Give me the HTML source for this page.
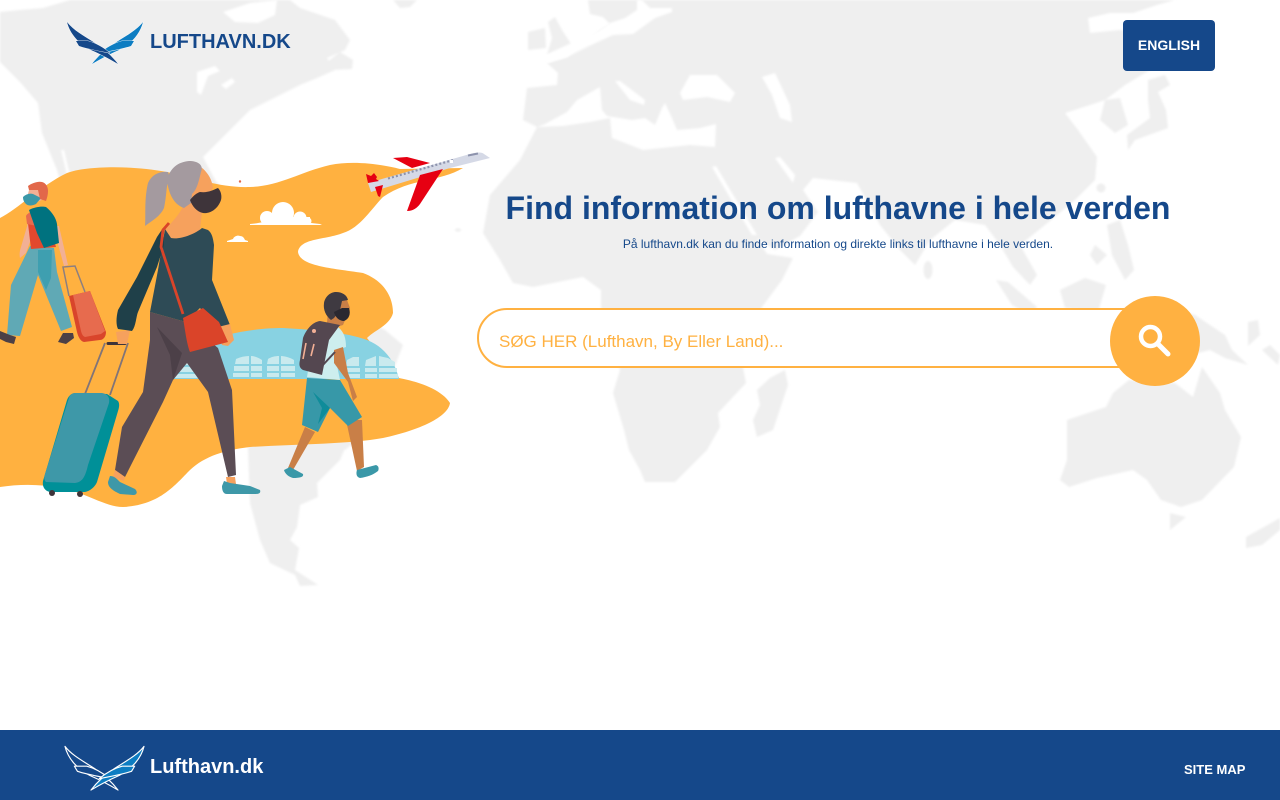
<!DOCTYPE html>
<html lang="da"><head><meta charset="utf-8"><title>Lufthavn.dk</title>
<style>
html,body{margin:0;padding:0;width:1280px;height:800px;overflow:hidden;background:#fff;font-family:"Liberation Sans",Arial,sans-serif}
.a{position:absolute;white-space:nowrap}
svg{position:absolute;left:0;top:0}
</style></head><body>
<svg width="1280" height="800" viewBox="0 0 1280 800">
<defs>
<filter id="b" x="-5%" y="-5%" width="110%" height="110%"><feGaussianBlur stdDeviation="1.1"/></filter>
<filter id="s" x="-5%" y="-5%" width="110%" height="110%"><feGaussianBlur stdDeviation="0.35"/></filter>
<path id="wl1" d="M67 22C73 30 84 36 95 43C104 49 112 56 118 64C108 58 100 54 91 50C79 44 70 34 67 22Z"/>
<path id="wl2" d="M76 41L88 41C96 43 104 48 110 53C100 51 88 49 79 46Z"/>
<path id="wr1" d="M143 22C137 30 126 36 115 43C106 49 98 56 92 64C102 58 110 54 119 50C131 44 140 34 143 22Z"/>
<path id="wr2" d="M134 41L122 41C114 43 106 48 100 53C110 51 122 49 131 46Z"/>
</defs>
<g fill="#efefef" filter="url(#b)">
<!-- North America -->
<path d="M0 62L0 12L20 10L43 8L70 0L290 0L300 8L335 20L350 40L345 50L327 58L335 70L317 78L300 85L250 110L235 125L215 145L203 157L215 180L300 280L385 330L403 345L370 430L345 450L250 450L200 360L130 300L70 215L57 170L42 133L38 103L20 82Z"/>
<path d="M327 62L340 52L353 60L352 69L330 70Z"/>
<path d="M393 0L417 0L410 7L400 8Z"/>
<!-- South America -->
<path d="M248 448L345 448L340 460L317 483L318 497L300 505L297 527L290 540L299 548L295 570L318 585L300 586L295 575L270 563L260 540L250 503Z"/>
<!-- Eurasia + Africa -->
<path d="M588 0L590 14L603 17L610 24L600 30L583 43L567 57L547 63L558 73L557 85L527 88L523 120L537 127L520 160L490 195L483 233L500 260L513 283L533 287L583 277L601 290L601 307L620 370L613 393L624 430L629 450L640 470L645 482L675 482L707 450L720 427L718 413L746 383L743 368L745 340L762 307L782 280L793 258L767 254L757 238L775 250L800 236L818 212L803 190L813 178L857 183L880 225L900 250L915 265L930 240L955 220L985 225L1000 245L1013 267L1030 285L1037 275L1020 245L1045 225L1075 200L1095 180L1097 157L1078 130L1065 113L1090 105L1105 100L1125 85L1150 70L1145 35L1120 30L1090 33L1088 18L1110 13L1133 13L1157 5L1175 0Z"/>
<!-- UK / Ireland -->
<path d="M528 32L545 28L546 48L528 50Z"/>
<path d="M548 22L555 17L562 30L573 47L555 55L547 55L552 38Z"/>
<!-- Japan / Korea -->
<path d="M1105 100L1120 98L1128 125L1115 133L1100 120Z" />
<path d="M1148 80L1165 75L1170 85L1158 92L1166 110L1168 128L1135 140L1128 150L1127 135L1150 118L1148 100Z"/>
<circle cx="1101" cy="188" r="4.500" />
<ellipse cx="928" cy="270" rx="4.500" ry="9"/>
<!-- SE Asia islands -->
<path d="M1107 225L1120 220L1128 245L1134 270L1125 280L1112 255Z"/>
<path d="M996 280L1008 282L1037 307L1030 315L1012 305Z"/>
<path d="M1060 290L1085 278L1106 285L1098 312L1065 308Z"/>
<path d="M1095 245L1107 255L1097 265L1090 255Z"/>
<!-- New Guinea -->
<path d="M1124 308L1145 300L1195 315L1225 335L1232 350L1248 365L1225 358L1210 350L1190 355L1160 345L1130 330Z"/>
<path d="M1248 322L1258 320L1260 335L1248 346Z"/><path d="M1262 350L1270 345L1280 355L1278 365Z"/>
<!-- Australia -->
<path d="M1202 367L1220 393L1225 410L1241 437L1234 467L1202 500L1181 507L1161 500L1147 480L1133 470L1097 478L1069 487L1060 480L1067 460L1067 420L1106 407L1113 393L1129 380L1175 383L1193 397Z"/>
<path d="M1170 513L1186 517L1170 530Z"/>
<path d="M1246 537L1280 518L1280 530L1262 545L1246 548Z"/>
<!-- Madagascar -->
<path d="M757 390L770 378L785 370L788 385L773 430L757 437L753 420L760 405Z"/>
<ellipse cx="458" cy="230" rx="3" ry="1.600"/>
</g>
<!-- white seas -->
<g fill="#fff" filter="url(#b)">
<path d="M223 12L250 3L277 0L275 15L258 23L235 22Z"/>
<path d="M197 72L215 66L220 71L208 76L201 95L197 92Z"/><path d="M221 85L232 78L235 82L226 89Z"/>
<path d="M61 150L64 150L70 175L67 175Z"/>
<path d="M537 127L545 124L567 112L577 100L600 87L602 110L607 116L632 120L645 118L655 125L662 108L665 103L672 118L677 130L700 128L716 124L715 147L690 145L643 150L612 138L610 118L590 122L563 126Z"/>
<path d="M615 81L620 81L645 100L644 105L630 100Z"/>
<path d="M680 93L690 75L717 75L735 93L730 102L707 97L683 100Z"/>
<path d="M762 77L775 73L790 105L792 122L780 118L772 95Z"/>
<path d="M712 167L716 166L757 235L752 235Z"/>
<path d="M775 158L780 157L795 175L793 183Z"/>
<path d="M637 0L642 0L650 8L672 8L672 12L655 18L633 34L613 35L587 47L567 57L547 63L545 55L567 45L600 30L610 23L625 18L637 10Z"/>
</g>
<!-- orange blob -->
<path fill="#ffb141" filter="url(#s)" d="M0 218C18 209 40 186 67 173C85 166 130 165 167 172C195 178 220 188 250 187C280 186 300 172 330 165C355 160 385 165 400 169L463 168C440 182 410 178 383 197C372 208 360 228 343 233C325 240 300 238 298 252C300 266 330 268 363 273C382 280 393 295 393 313C390 325 375 330 367 338L399 378C420 382 442 390 450 403C448 417 420 430 383 438C350 444 300 444 250 447C225 450 205 456 190 470C175 485 160 505 123 507C105 507 85 492 60 488C40 484 20 484 0 487Z"/>
<!-- terminal -->
<path fill="#88d2e2" d="M172 379L200 345C225 332 260 328 283 328C315 330 345 332 367 340C385 347 395 362 399 379Z"/>
<g fill="#c9eaee">
<path d="M179 367L196 367L196 372L176 372Z"/><path d="M175 374H198V378H175Z"/><path d="M184 359L198 358V365H181Z"/>
<path d="M234 366H249V371H234ZM251 366H262V371H251ZM233 373H249V377H233ZM251 373H262V377H251ZM236 359C240 357 245 356 249 356V364H235ZM251 356C255 356 259 358 262 360V364H251Z"/>
<path d="M267 366H279V371H267ZM281 366H295V371H281ZM267 373H279V377H267ZM281 373H295V377H281ZM268 359C271 357 275 356 279 356V364H267ZM281 356C285 356 291 358 294 360V364H281Z"/>
<path d="M345 368H360V372H345ZM346 374H360V378H346ZM347 360L353 357L359 357V366H346Z"/>
<path d="M365 368H377V372H365ZM379 368H397V372H379ZM365 374H377V378H365ZM379 374H398V378H379ZM366 360L376 356V366H365ZM379 356L388 358L395 362V366H379Z"/>
</g>
<!-- clouds -->
<g fill="#fff"><path d="M250 224C260 223 267 222 268 218L320 224L322 225H250Z"/><circle cx="267" cy="218" r="7"/><circle cx="283" cy="213" r="11"/><circle cx="300" cy="218" r="6.500"/><circle cx="308" cy="221" r="3.500"/><rect x="262" y="217" width="48" height="7"/>
<path d="M227 241L233 239C234 236 238 235 240 236C243 236 244 238 245 240L248 241V242H227Z"/></g>
<circle cx="240" cy="181.500" r="1.200" fill="#e2684a"/>
<!-- plane -->
<path fill="#e60012" d="M393 158L407 157L430 163L412 168Z"/>
<path fill="#d5d9e6" d="M368 183L470 154C477 152 482 152 484 154L490 158L450 168L371 192Z"/>
<path fill="none" stroke="#8d93ad" stroke-width="2.200" stroke-dasharray="2 2.100" d="M388 178.500L455 159.500"/>
<path fill="none" stroke="#8d93ad" stroke-width="2" d="M468 155.500L478 153.500"/>
<rect x="450" y="160" width="3" height="3" fill="#fff"/>
<path fill="#e60012" d="M443 169L420 175L407 211C413 211 417 208 420 204Z"/>
<path fill="#e60012" d="M366 174L371 176L374 173L377 177L376 179L379 181L368 183Z"/>
<path fill="#e60012" d="M375 187L383 185L380 197L378 196Z"/>
<!-- person 1 -->
<path fill="#d9452b" d="M69 296L90 291L106 332C106 337 103 340 100 340L84 342C80 341 78 336 77 332Z"/>
<path fill="#e76b4e" d="M73 295L90 291L105 331L101 334L85 337C83 336 82 335 81 331Z"/>
<path fill="none" stroke="#8c7f80" stroke-width="1.500" d="M69 296L63 267L75 266L85 292"/>
<path fill="#60a9b5" d="M30 246L54 248L57 272L72 327L61 331L38 275L20 336L7 335L11 285Z"/>
<path fill="#3e9fb0" d="M38 250L52 250L51 278L46 290L38 272Z"/>
<path fill="#4c4046" d="M0 331L10 335L16 337L14 344L6 342L0 339Z"/><path fill="#4c4046" d="M63 333L73 333L74 338L66 344L58 342Z"/>
<path fill="#f2b095" d="M28 223L36 225L26 253L20 258C19 254 20 250 21 247Z"/><path fill="#f2b095" d="M53 226L59 226L68 265L64 266Z"/>
<path fill="#e2482e" d="M27 215C32 210 38 208 44 207L56 247L31 249Z"/>
<path fill="#e76b4e" d="M26 216C28 212 33 212 36 214L37 226L27 224Z"/>
<path fill="#00727f" d="M29 210C34 207 42 206 46 207C52 212 56 218 57 224L59 243L44 248L37 233Z"/>
<path fill="#f2b095" d="M30 186L42 185L42 200L32 204L27 198Z"/>
<path fill="#3b98a8" d="M23 197C26 194 30 193 33 194L41 198L36 204C32 206 28 206 26 204C24 202 23 200 23 197Z"/>
<path fill="#e2684a" d="M28 186C32 183 38 181 42 182C46 183 48 187 48 191C48 195 47 198 46 201L40 199L38 190L29 190Z"/>
<!-- woman: suitcase -->
<path fill="none" stroke="#817478" stroke-width="1.800" d="M85 394L105 343M110 395L128 343"/>
<path fill="#009098" d="M67 400C69 395 72 393 76 393L107 394L118 401C120 404 119 408 118 411L97 482C95 487 90 491 85 492L50 492C45 491 42 487 43 481Z"/>
<path fill="#3e98a8" d="M69 398C70 394 73 393 76 393L102 393C108 394 110 398 109 403L88 465C85 478 82 482 75 483L46 482C44 480 44 477 45 474Z"/>
<circle cx="52" cy="493" r="3" fill="#3e343a"/><circle cx="80" cy="494" r="3" fill="#3e343a"/>
<path stroke="#3e343a" stroke-width="3" stroke-linecap="round" d="M108 343.500H125"/>
<path fill="#f6a15d" d="M116 332L130 330L127 344L118 344Z"/>
<!-- ponytail -->
<path fill="#a49a9f" d="M168 172C160 171 152 174 148 183C144 200 146 215 145 226C150 222 160 217 164 208C167 195 166 182 170 178Z"/>
<!-- neck -->
<path fill="#f6a15d" d="M198 165C206 170 212 178 213 188L205 200L202 212L200 230C192 236 180 240 170 238L165 230C172 222 180 214 183 206Z"/>
<path fill="#a49a9f" d="M189 161C198 161 204 165 201 172C199 180 197 190 192 194L191 203L184 208C172 204 168 190 167 180C170 168 178 162 189 161Z"/>
<path fill="#3e343a" d="M190 200C194 195 197 193 200 192C208 193 213 190 218 188C221 191 222 196 221 200C218 209 210 214 203 213C197 212 192 206 190 200Z"/>
<!-- pants -->
<path fill="#5b4d55" d="M150 312L186 322L218 348L232 390L236 475L228 477L208 392L187 363L173 380L163 402L125 477L115 470L122 427L143 392L150 340Z"/>
<path fill="#4c4048" d="M157 327L182 353L173 380L170 355Z"/>
<path fill="#f6a15d" d="M115 470L125 477L124 481L113 477Z"/><path fill="#f6a15d" d="M226 477H235L236 484H227Z"/>
<path fill="#3e98a8" d="M110 476C114 476 116 478 120 482L135 489C138 492 137 495 133 495L120 494C114 491 108 488 108 482Z"/>
<path fill="#3e98a8" d="M224 481L230 483L250 486L260 490C261 493 259 494 256 494L227 494C223 494 222 490 222 486Z"/>
<!-- top -->
<path fill="#2e4b56" d="M165 229L171 238C180 240 195 234 202 228L208 230C212 233 213 238 214 245L212 280L230 325L218 330L200 308L186 322L150 312L158 270Z"/>
<path fill="#1f4049" d="M163 228L157 237L137 277L118 310C116 318 116 325 118 329L132 331C136 326 136 317 138 312L157 267L164 245Z"/>
<path fill="none" stroke="#da4429" stroke-width="2.800" d="M169 223L163 230L161 247L183 314"/>
<path fill="#f6a15d" d="M218 327L230 324L234 340L228 346L222 345Z"/>
<path fill="#da4429" d="M183 318L203 308L219 322L228 342L190 352C187 345 185 330 183 318Z"/>
<!-- man -->
<path fill="#c97f47" d="M305 427L315 432L293 470L288 468Z"/><path fill="#c97f47" d="M346 420L362 420L364 467L357 471Z"/>
<path fill="#3798a8" d="M307 378L340 380L362 417L348 426L330 408L318 432L302 425Z"/>
<path fill="#0f8c9a" d="M313 392L330 408L318 424L322 408Z"/>
<path fill="#3a98a8" d="M284 470L290 467L303 474C304 477 300 478 293 478C289 477 285 474 284 470Z"/>
<path fill="#3a98a8" d="M357 470L376 465C379 466 379 469 378 471C373 475 367 477 360 478C356 477 356 473 357 470Z"/>
<path fill="#cdeeee" d="M318 323L338 327C344 332 346 338 346 347L334 351L340 380L307 377L312 345Z"/>
<path fill="#c97f47" d="M334 350L343 347L348 373L357 397L353 401L348 382L334 363Z"/>
<path fill="#c97f47" d="M329 296L347 300L350 308L343 325L333 328L327 323Z"/>
<path fill="#3f3a41" d="M336 292C342 292 347 295 348 300L342 301L340 310L334 318L331 320C326 316 323 310 324 303C325 297 330 292 336 292Z"/>
<path fill="#2a2830" d="M334 312L342 308H349C351 314 349 319 344 321C339 321 335 317 334 312Z"/>
<path fill="#544750" d="M303 338C306 330 312 322 320 321L340 325L329 340L322 375L303 370C299 368 299 364 300 360Z"/>
<path fill="none" stroke="#f2b095" stroke-width="1.600" d="M306 343L303 359M314 344L311 356"/>
<circle cx="314" cy="331" r="2" fill="#f2b095"/>
<path fill="none" stroke="#544750" stroke-width="2" d="M322 366L335 352"/>
<!-- top logo -->
<g stroke="#fff" stroke-width="0.800" paint-order="stroke">
<use href="#wr1" fill="#0d7dc2"/><use href="#wr2" fill="#0d7dc2"/><use href="#wl1" fill="#15488a"/><use href="#wl2" fill="#15488a"/>
</g>
<rect y="730" width="1280" height="70" fill="#15488a"/>
<g transform="translate(-4.700 723.500) scale(1.040 1.040)" stroke="#fff" stroke-width="1.100" stroke-linejoin="round">
<use href="#wl1" fill="#15488a"/><use href="#wl2" fill="#15488a"/><use href="#wr1" fill="#0d7dc2"/><use href="#wr2" fill="#0d7dc2"/>
</g>
</svg>
<div class="a" style="left:150px;top:30px;font-size:20px;line-height:24px;font-weight:700;color:#15488a">LUFTHAVN.DK</div>
<div class="a" style="left:1123px;top:20px;width:92px;height:51px;background:#15488a;border-radius:4px;color:#fff;font-size:14px;font-weight:700;line-height:51px;text-align:center">ENGLISH</div>
<div class="a" style="left:438px;width:800px;top:187px;text-align:center;font-size:32px;line-height:42px;font-weight:700;color:#15488a">Find information om lufthavne i hele verden</div>
<div class="a" style="left:438px;width:800px;top:236px;text-align:center;font-size:12px;line-height:16px;color:#15488a">På lufthavn.dk kan du finde information og direkte links til lufthavne i hele verden.</div>
<div class="a" style="left:477px;top:308px;width:680px;height:56px;border:2px solid #ffb141;border-radius:30px;background:#fff"></div>
<div class="a" style="left:499px;top:331px;font-size:17px;line-height:22px;color:#ffb141">SØG HER (Lufthavn, By Eller Land)...</div>
<div class="a" style="left:1110px;top:296px;width:90px;height:90px;border-radius:50%;background:#ffb141"></div>
<svg width="1280" height="800" viewBox="0 0 1280 800"><circle cx="1150.500" cy="336.500" r="9.500" fill="none" stroke="#fff" stroke-width="4.500"/><path d="M1158 344L1168 354" stroke="#fff" stroke-width="5" stroke-linecap="round"/></svg>
<div class="a" style="left:150px;top:755px;font-size:20px;line-height:24px;font-weight:700;color:#fff">Lufthavn.dk</div>
<div class="a" style="left:1184px;top:762px;font-size:13px;line-height:16px;font-weight:700;color:#fff">SITE MAP</div>
</body></html>
